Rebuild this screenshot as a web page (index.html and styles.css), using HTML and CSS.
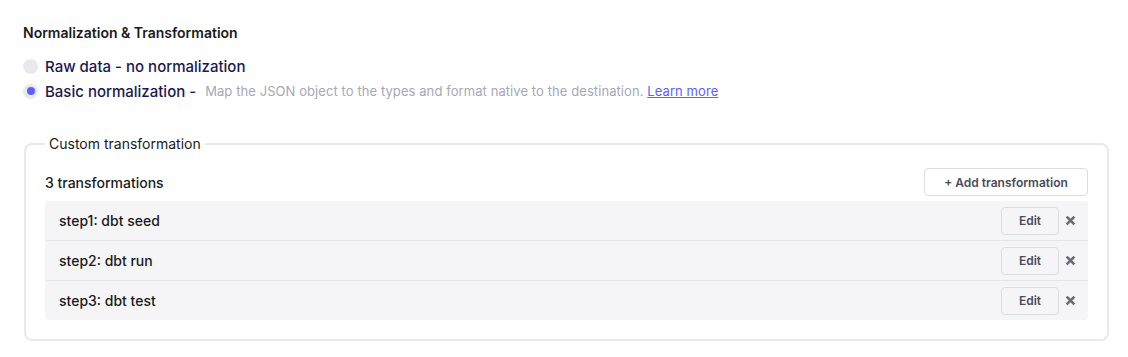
FILE: index.html
```html
<!DOCTYPE html>
<html lang="en">
<head>
  <meta charset="UTF-8" />
  <title>Normalization &amp; Transformation</title>
  <link rel="stylesheet" href="styles.css">
</head>
<body>
  <div class="content">
    <div class="section-title">Normalization &amp; Transformation</div>

    <div class="options">
      <label class="option">
        <span class="radio"></span>
        <span class="option-label">Raw data - no normalization</span>
      </label>
      <label class="option">
        <span class="radio checked"></span>
        <span class="option-label">Basic normalization -</span>
        <span class="option-desc">Map the JSON object to the types and format native to the destination. <a href="#">Learn more</a></span>
      </label>
    </div>

    <fieldset class="custom">
      <legend>Custom transformation</legend>
      <div class="custom-header">
        <div class="count">3 transformations</div>
        <button class="add-btn">+ Add transformation</button>
      </div>
      <div class="list">
        <div class="row">
          <div class="row-name">step1: dbt seed</div>
          <button class="edit-btn">Edit</button>
          <svg class="remove" viewBox="0 0 10 10"><path d="M1.5 1.5L8.5 8.5M8.5 1.5L1.5 8.5"/></svg>
        </div>
        <div class="row">
          <div class="row-name">step2: dbt run</div>
          <button class="edit-btn">Edit</button>
          <svg class="remove" viewBox="0 0 10 10"><path d="M1.5 1.5L8.5 8.5M8.5 1.5L1.5 8.5"/></svg>
        </div>
        <div class="row">
          <div class="row-name">step3: dbt test</div>
          <button class="edit-btn">Edit</button>
          <svg class="remove" viewBox="0 0 10 10"><path d="M1.5 1.5L8.5 8.5M8.5 1.5L1.5 8.5"/></svg>
        </div>
      </div>
    </fieldset>
  </div>
</body>
</html>
```

FILE: styles.css
```css
body {
  font-family: 'Inter', 'Liberation Sans', sans-serif;
  background: #fff;
  color: #1a1a1a;
  margin: 0;
  padding: 0;
}

.content {
  padding: 24px 19px 0 23px;
}

.section-title {
  font-size: 14px;
  font-weight: 600;
  line-height: 18px;
  color: #1a1a1a;
}

.options {
  margin-top: 15px;
  display: flex;
  flex-direction: column;
  gap: 7px;
}

.option {
  display: flex;
  align-items: center;
  height: 18px;
}

.radio {
  width: 15px;
  height: 15px;
  border-radius: 50%;
  background: #e8e8ed;
  margin-right: 7px;
  display: flex;
  align-items: center;
  justify-content: center;
}

.radio.checked::after {
  content: '';
  width: 8px;
  height: 8px;
  border-radius: 50%;
  background: #615eff;
}

.option-label {
  font-size: 15px;
  font-weight: 500;
  color: #1a194d;
}

.option-desc {
  font-size: 13px;
  letter-spacing: 0.08px;
  color: #a7a7b5;
  margin-left: 9px;
}

.option-desc a {
  color: #615eff;
}

.custom {
  margin: 35px 0 0 1px;
  border: 2px solid #e8e8ed;
  border-radius: 8px;
  padding: 16px 19px 19px 19px;
}

.custom legend {
  padding: 0 4px;
  font-size: 14px;
  color: #1a1a1a;
}

.custom-header {
  display: flex;
  align-items: center;
  justify-content: space-between;
  margin-bottom: 5px;
}

.count {
  font-size: 14px;
  font-weight: 500;
}

.add-btn {
  font-family: inherit;
  font-size: 12px;
  font-weight: 600;
  color: #4a4a5a;
  background: #fff;
  border: 1px solid #dcdce3;
  border-radius: 4px;
  height: 28px;
  width: 164px;
  cursor: pointer;
}

.list {
  background: #f5f5f8;
  border-radius: 4px;
}

.row {
  display: flex;
  align-items: center;
  height: 39px;
  padding: 0 12px 0 14px;
  border-bottom: 1px solid #e4e4eb;
}

.row:last-child {
  border-bottom: none;
}

.row-name {
  flex: 1;
  font-size: 14px;
  font-weight: 500;
}

.edit-btn {
  font-family: inherit;
  font-size: 12px;
  font-weight: 600;
  color: #4a4a5a;
  background: #f5f5f8;
  border: 1px solid #dcdce3;
  border-radius: 4px;
  height: 28px;
  width: 58px;
  cursor: pointer;
}

.remove {
  margin-left: 6px;
  width: 11px;
  height: 11px;
  fill: none;
  stroke: #6b6b7b;
  stroke-width: 2.4;
}
```
